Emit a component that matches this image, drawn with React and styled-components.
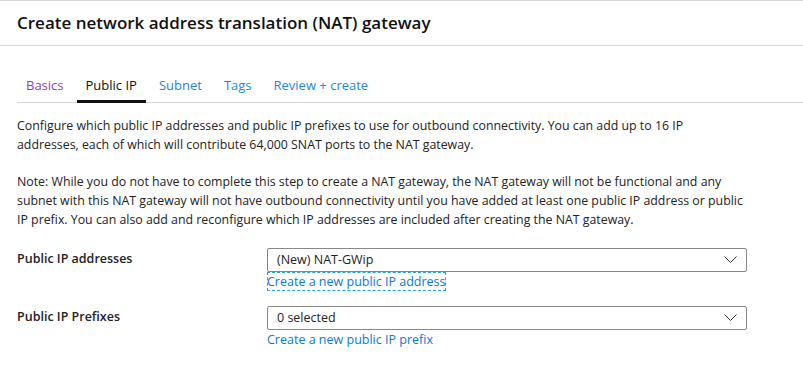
import React from "react";
import styled, { createGlobalStyle } from "styled-components";

const GlobalStyle = createGlobalStyle`
  body {
    margin: 0;
    background: #fff;
    font-family: "Open Sans", "Noto Sans", sans-serif;
    color: #323130;
  }
`;

const Page = styled.div`
  width: 803px;
  height: 366px;
  border-top: 1px solid #d6d6d6;
  box-sizing: border-box;
  overflow: hidden;
`;

const Header = styled.div`
  height: 44px;
  border-bottom: 1px solid #d6d6d6;
  padding: 0 17px;
  display: flex;
  align-items: center;
  h1 {
    margin: 0 0 2px;
    font-size: 17px;
    font-weight: 600;
    color: #111;
  }
`;

const Body = styled.div`
  padding: 29px 0 0 17px;
`;

const Tabs = styled.div`
  display: flex;
  gap: 4px;
  border-bottom: 1px solid #d6d6d6;
`;

const Tab = styled.div`
  padding: 0 9px 5px;
  font-size: 13px;
  line-height: 20px;
  color: ${(p) => (p.$active ? "#111" : p.$visited ? "#8e44ad" : "#1f86d6")};
  border-bottom: 3px solid ${(p) => (p.$active ? "#111" : "transparent")};
  margin-bottom: -1px;
  cursor: pointer;
`;

const Para = styled.p`
  margin: ${(p) => p.$top}px 0 0;
  font-size: 12.35px;
  line-height: 18.7px;
  color: #222;
  span {
    display: block;
    white-space: nowrap;
  }
`;

const Field = styled.div`
  display: grid;
  grid-template-columns: 250px 480px;
  margin-top: ${(p) => p.$top}px;
`;

const Label = styled.div`
  font-size: 12.5px;
  font-weight: 600;
  color: #222;
  line-height: 20px;
  padding-top: 1px;
`;

const Control = styled.div`
  display: flex;
  flex-direction: column;
  align-items: flex-start;
`;

const Select = styled.div`
  width: 480px;
  height: 24px;
  box-sizing: border-box;
  border: 1px solid #8a8886;
  border-radius: 2px;
  display: flex;
  align-items: center;
  justify-content: space-between;
  padding: 0 9px 0 9px;
  font-size: 12.5px;
  color: #222;
`;

const Link = styled.a`
  font-size: 12.5px;
  line-height: 19px;
  color: #0f78d4;
  text-decoration: none;
  outline: ${(p) => (p.$focused ? "1px dashed #1ea4e6" : "none")};
  outline-offset: -1px;
  cursor: pointer;
`;

const Chevron = () => (
  <svg width="13" height="7" viewBox="0 0 13 7" fill="none">
    <path d="M0.5 0.5l6 6 6-6" stroke="#333" strokeWidth="1" />
  </svg>
);

export default function App() {
  return (
    <Page>
      <GlobalStyle />
      <Header>
        <h1>Create network address translation (NAT) gateway</h1>
      </Header>
      <Body>
        <Tabs>
          <Tab $visited>Basics</Tab>
          <Tab $active>Public IP</Tab>
          <Tab>Subnet</Tab>
          <Tab>Tags</Tab>
          <Tab>Review + create</Tab>
        </Tabs>
        <Para $top={14}>
          <span>
            Configure which public IP addresses and public IP prefixes to use for outbound connectivity. You can add up to 16 IP
          </span>
          <span>addresses, each of which will contribute 64,000 SNAT ports to the NAT gateway.</span>
        </Para>
        <Para $top={19}>
          <span>
            Note: While you do not have to complete this step to create a NAT gateway, the NAT gateway will not be functional and any
          </span>
          <span>
            subnet with this NAT gateway will not have outbound connectivity until you have added at least one public IP address or public
          </span>
          <span>IP prefix. You can also add and reconfigure which IP addresses are included after creating the NAT gateway.</span>
        </Para>
        <Field $top={18}>
          <Label>Public IP addresses</Label>
          <Control>
            <Select>
              (New) NAT-GWip
              <Chevron />
            </Select>
            <Link $focused>Create a new public IP address</Link>
          </Control>
        </Field>
        <Field $top={15}>
          <Label>Public IP Prefixes</Label>
          <Control>
            <Select>
              0 selected
              <Chevron />
            </Select>
            <Link>Create a new public IP prefix</Link>
          </Control>
        </Field>
      </Body>
    </Page>
  );
}
